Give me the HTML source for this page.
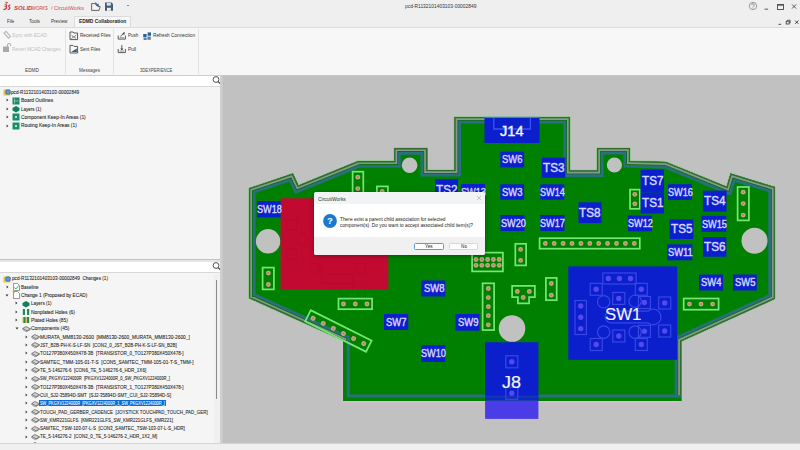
<!DOCTYPE html>
<html><head><meta charset="utf-8">
<style>
*{box-sizing:border-box}
html,body{margin:0;padding:0}
body{width:800px;height:450px;overflow:hidden;position:relative;background:#f0f0f0;font-family:"Liberation Sans",sans-serif;color:#222}
.a{position:absolute}
.t{position:absolute;white-space:pre;transform-origin:0 50%}
.k{-webkit-text-stroke:0.18px currentColor}
svg{position:absolute;overflow:visible}
</style></head><body>
<div class="a" style="left:0px;top:0px;width:800px;height:27px;background:#efefef;"></div>
<svg style="left:0;top:0" width="14" height="14" viewBox="0 0 14 14">
<path d="M5.4 2.2 L7.6 2.6 L5.8 3.6" fill="none" stroke="#cc3433" stroke-width="0.9"/>
<path d="M4.6 5 C6.6 4.4 7.6 5.6 5.8 6.6 C7.6 6.8 6.6 9.4 3.4 9.6" fill="none" stroke="#cc3433" stroke-width="1.1"/>
<path d="M10.4 5 C8.8 4.8 8 6.4 9.4 7.2 C10.6 7.9 9.6 9.6 7.8 9.4" fill="none" stroke="#cc3433" stroke-width="1.1"/>
</svg>
<div class="t" style="left:13.50px;top:4.62px;font-size:6.2px;line-height:6.2px;color:#cc3a3a;font-weight:bold;transform:scaleX(0.975);font-style:italic;">SOLID</div>
<div class="t" style="left:32.30px;top:4.62px;font-size:6.2px;line-height:6.2px;color:#cc3a3a;transform:scaleX(0.678);font-style:italic;">WORKS</div>
<div class="t" style="left:50.80px;top:5.38px;font-size:6.2px;line-height:6.2px;color:#cf4a48;transform:scaleX(0.856);">/ CircuitWorks</div>
<svg style="left:90px;top:1px" width="12" height="11" viewBox="0 0 12 11">
<path d="M1.6 2.6 h3.2 l3 3 h2.4 l-1.2 3.8 h-7.4 z" fill="#f4f4f4" stroke="#555" stroke-width="0.9" stroke-linejoin="round"/>
<path d="M5.2 1.6 l3 3" stroke="#2a5a9a" stroke-width="1.3"/><path d="M8.6 2.6 v2.4 h-2.4 z" fill="#2a5a9a"/>
</svg>
<svg style="left:104px;top:1px" width="10" height="11" viewBox="0 0 10 11">
<path d="M1 1.6 h6.6 l1.4 1.4 v6.8 h-8 z" fill="#455f78"/>
<rect x="2.8" y="2" width="4" height="2.6" fill="#dfe5ea"/>
<rect x="3" y="6.8" width="3.8" height="3" fill="#f0f0f0"/>
</svg>
<div class="a" style="left:127.4px;top:4.6px;width:1.4000000000000057px;height:1.8000000000000007px;background:#888;"></div>
<div class="t" style="left:404.50px;top:3.69px;font-size:5.4px;line-height:5.4px;color:#333;transform:scaleX(0.907);">pcd-R1132101403103-00002849</div>
<svg style="left:748px;top:1px" width="52" height="12" viewBox="0 0 52 12">
<circle cx="5" cy="5" r="3.7" fill="none" stroke="#666" stroke-width="0.6"/>
<path d="M3.7 4 a1.3 1.3 0 1 1 1.9 1.1 q-0.6 0.3 -0.6 1 v0.4" fill="none" stroke="#555" stroke-width="0.6"/><circle cx="5" cy="7.6" r="0.35" fill="#555"/>
<path d="M16.5 8.2 h3.6" stroke="#333" stroke-width="0.8"/>
<rect x="29.6" y="3.4" width="5.8" height="5.2" fill="none" stroke="#333" stroke-width="0.8"/>
<path d="M29.6 4.2 h5.8" stroke="#333" stroke-width="0.8"/>
<path d="M44 3.4 l4.2 4.2 M48.2 3.4 l-4.2 4.2" stroke="#333" stroke-width="0.8"/>
</svg>
<svg style="left:776px;top:18px" width="24" height="9" viewBox="0 0 24 9">
<path d="M2.5 6.3 h2.6" stroke="#333" stroke-width="0.9"/>
<rect x="10.2" y="3.2" width="3" height="2.8" fill="none" stroke="#333" stroke-width="0.8"/>
<path d="M11.4 3.2 v-1 h2.8 v2.6 h-1" fill="none" stroke="#333" stroke-width="0.7"/>
<path d="M19.2 2.6 l3.2 3.2 M22.4 2.6 l-3.2 3.2" stroke="#333" stroke-width="0.9"/>
</svg>
<div class="t" style="left:7.00px;top:19.32px;font-size:5.6px;line-height:5.6px;color:#333;transform:scaleX(0.787);">File</div>
<div class="t" style="left:28.50px;top:19.32px;font-size:5.6px;line-height:5.6px;color:#333;transform:scaleX(0.835);">Tools</div>
<div class="t" style="left:51.25px;top:19.32px;font-size:5.6px;line-height:5.6px;color:#333;transform:scaleX(0.818);">Preview</div>
<div class="a" style="left:74px;top:16px;width:57px;height:12px;background:#f7f7f7;border:1px solid #dcdcdc;border-bottom:none;"></div>
<div class="t" style="left:78.80px;top:19.32px;font-size:5.6px;line-height:5.6px;color:#222;font-weight:bold;transform:scaleX(0.872);">EDMD Collaboration</div>
<div class="a" style="left:0px;top:27px;width:800px;height:49px;background:#f7f7f7;border-top:1px solid #dcdcdc;border-bottom:1px solid #cdcdcd;"></div>
<div class="a" style="left:65.2px;top:29px;width:1.0px;height:45px;background:#e3e3e3;"></div>
<div class="a" style="left:112.8px;top:29px;width:1.0px;height:45px;background:#e3e3e3;"></div>
<div class="a" style="left:198px;top:29px;width:1px;height:45px;background:#e3e3e3;"></div>
<svg style="left:2px;top:30px" width="10" height="24" viewBox="0 0 10 24">
<path d="M2 3 l2 -1.6 l4.5 5 l-2 1.8 z" fill="none" stroke="#b9b9b9" stroke-width="1.2"/>
<rect x="1" y="16.5" width="6" height="5.5" fill="#a9a9a9"/>
<path d="M5.5 16.5 v-1.5 a1.6 1.6 0 0 1 3.2 0 v1" fill="none" stroke="#a9a9a9" stroke-width="1"/>
</svg>
<div class="t" style="left:11.90px;top:33.29px;font-size:5.4px;line-height:5.4px;color:#bdbdbd;transform:scaleX(0.883);">Sync with ECAD</div>
<div class="t" style="left:12.20px;top:47.29px;font-size:5.4px;line-height:5.4px;color:#bdbdbd;transform:scaleX(0.861);">Revert MCAD Changes</div>
<div class="t" style="left:25.00px;top:68.19px;font-size:5.4px;line-height:5.4px;color:#444;transform:scaleX(0.882);">EDMD</div>
<svg style="left:69px;top:31px" width="10" height="23" viewBox="0 0 10 23">
<path d="M1 1 h3 l1 1 h3.6 v6.6 h-7.6 z" fill="#f6f6f6" stroke="#5a5a5a" stroke-width="1"/>
<path d="M2.4 3.8 l2.4 2.6 l2.4 -2.6 M2.4 7.6 l2.4 -2 l2.4 2" fill="none" stroke="#6a6a6a" stroke-width="0.8"/>
<path d="M1 14.4 h3 l1 1 h3.6 v6.6 h-7.6 z" fill="#f6f6f6" stroke="#5a5a5a" stroke-width="1"/>
<path d="M2.2 21 l5.6 -3.6 v3.6 z" fill="#2c5a88"/>
</svg>
<div class="t" style="left:79.70px;top:33.09px;font-size:5.4px;line-height:5.4px;color:#333;transform:scaleX(0.864);">Received Files</div>
<div class="t" style="left:79.70px;top:47.39px;font-size:5.4px;line-height:5.4px;color:#333;transform:scaleX(0.845);">Sent Files</div>
<div class="t" style="left:79.30px;top:68.19px;font-size:5.4px;line-height:5.4px;color:#444;transform:scaleX(0.853);">Messages</div>
<svg style="left:117px;top:31px" width="36" height="23" viewBox="0 0 36 23">
<path d="M1.2 4.5 v3.6 h7.2 v-3.6" fill="none" stroke="#5a5a5a" stroke-width="1"/>
<path d="M2.6 6.6 h4.4" stroke="#777" stroke-width="0.7"/>
<path d="M3.4 5.4 l3.6 -3.6" stroke="#4a4a4a" stroke-width="0.9"/><path d="M7.6 0.8 v2.8 h-2.8 z" fill="#4a4a4a"/>
<path d="M1.2 18 v3.6 h7.2 v-3.6" fill="none" stroke="#5a5a5a" stroke-width="1"/>
<path d="M2.6 20.1 h4.4" stroke="#777" stroke-width="0.7"/>
<path d="M4.8 14 v4.6" stroke="#4a4a4a" stroke-width="0.9"/><path d="M3.2 17.4 h3.2 l-1.6 2 z" fill="#4a4a4a"/>
<path d="M26.2 3 h3.4 v3.4 h-3.4 z" fill="#2a62a0"/><path d="M30.6 1.4 h3.4 v3.4 h-3.4 z" fill="#2a62a0"/>
<path d="M26.6 7.2 h3 v1.6 h-3 z" fill="#2a62a0"/><path d="M30.4 5.6 h3.4 v3.2 h-3.4 z" fill="#6a7a8a"/>
</svg>
<div class="t" style="left:127.50px;top:33.09px;font-size:5.4px;line-height:5.4px;color:#333;transform:scaleX(0.845);">Push</div>
<div class="t" style="left:127.50px;top:47.39px;font-size:5.4px;line-height:5.4px;color:#333;transform:scaleX(0.898);">Pull</div>
<div class="t" style="left:152.90px;top:33.09px;font-size:5.4px;line-height:5.4px;color:#333;transform:scaleX(0.882);">Refresh Connection</div>
<div class="t" style="left:140.30px;top:68.19px;font-size:5.4px;line-height:5.4px;color:#444;transform:scaleX(0.775);">3DEXPERIENCE</div>
<div class="a" style="left:0px;top:75.5px;width:221px;height:367.5px;background:#f5f5f5;"></div>
<div class="a" style="left:0px;top:75.5px;width:221px;height:11.0px;background:#ffffff;border-bottom:1.4px solid #d8d8d8;"></div>
<svg style="left:212px;top:76px" width="9" height="9" viewBox="0 0 9 9">
<circle cx="4" cy="3.5" r="2.9" fill="none" stroke="#333" stroke-width="0.85"/>
<path d="M6.1 5.6 l2.3 2.3" stroke="#333" stroke-width="1.1"/>
</svg>
<div class="a" style="left:0px;top:258.5px;width:221px;height:1.1999999999999886px;background:#c2c2c2;"></div>
<div class="a" style="left:0px;top:259.7px;width:221px;height:2.3000000000000114px;background:#e6e6e6;"></div>
<div class="a" style="left:0px;top:262px;width:221px;height:10.5px;background:#ffffff;border-bottom:1.4px solid #d8d8d8;"></div>
<svg style="left:212px;top:261.5px" width="9" height="9" viewBox="0 0 9 9">
<circle cx="4" cy="3.5" r="2.9" fill="none" stroke="#333" stroke-width="0.85"/>
<path d="M6.1 5.6 l2.3 2.3" stroke="#333" stroke-width="1.1"/>
</svg>
<div class="a" style="left:213.5px;top:273.5px;width:6.5px;height:169.5px;background:#f0f0f0;"></div>
<div class="a" style="left:220px;top:75.5px;width:2.5px;height:367.5px;background:#cfcfcf;"></div>
<div class="a" style="left:215.8px;top:280px;width:1.0px;height:119px;background:#8a8a8a;"></div>
<div class="a" style="left:0px;top:443px;width:800px;height:1px;background:#d4d4d4;"></div>
<svg style="left:2.80px;top:88.20px" width="9" height="8" viewBox="0 0 9 8"><path d="M0.5 1.5 h6 l1 1 v5 h-7 z" fill="#e7c24a"/><circle cx="5" cy="4" r="2.8" fill="#3c78b8"/><path d="M2.6 4 h4.8 M5 1.2 v5.6" stroke="#9cd" stroke-width="0.5"/></svg>
<div class="t" style="left:11.20px;top:89.72px;font-size:5.6px;line-height:5.6px;color:#222222;transform:scaleX(0.835);-webkit-text-stroke:0.08px currentColor;">pcd-R1132101403103-00002849</div>
<svg style="left:5.50px;top:98.30px" width="3" height="4" viewBox="0 0 3 4"><path d="M0.6 0.5 L2.4 2 L0.6 3.5 Z" fill="#333"/></svg>
<svg style="left:12.00px;top:96.60px" width="9" height="8" viewBox="0 0 9 8"><rect x="0.5" y="0.5" width="7" height="7" fill="#1b8a68"/><path d="M2.5 1.5 v5 M2.5 4 h4" stroke="#cfe" stroke-width="0.5"/></svg>
<div class="t" style="left:21.00px;top:98.12px;font-size:5.6px;line-height:5.6px;color:#222222;transform:scaleX(0.870);-webkit-text-stroke:0.08px currentColor;">Board Outlines</div>
<svg style="left:5.50px;top:106.70px" width="3" height="4" viewBox="0 0 3 4"><path d="M0.6 0.5 L2.4 2 L0.6 3.5 Z" fill="#333"/></svg>
<svg style="left:12.00px;top:105.00px" width="9" height="8" viewBox="0 0 9 8"><path d="M0.5 3 l3.5 -2 l3.5 2 v2.5 l-3.5 2 l-3.5 -2 z" fill="#167e5e"/></svg>
<div class="t" style="left:21.00px;top:106.52px;font-size:5.6px;line-height:5.6px;color:#222222;transform:scaleX(0.802);-webkit-text-stroke:0.08px currentColor;">Layers (1)</div>
<svg style="left:5.50px;top:115.10px" width="3" height="4" viewBox="0 0 3 4"><path d="M0.6 0.5 L2.4 2 L0.6 3.5 Z" fill="#333"/></svg>
<svg style="left:12.00px;top:113.40px" width="9" height="8" viewBox="0 0 9 8"><rect x="0.5" y="0.5" width="7" height="7" fill="#1a8f6c"/><rect x="3" y="3.2" width="2" height="1.6" fill="#bfe"/></svg>
<div class="t" style="left:21.00px;top:114.92px;font-size:5.6px;line-height:5.6px;color:#222222;transform:scaleX(0.871);-webkit-text-stroke:0.08px currentColor;">Component Keep-In Areas (1)</div>
<svg style="left:5.50px;top:123.50px" width="3" height="4" viewBox="0 0 3 4"><path d="M0.6 0.5 L2.4 2 L0.6 3.5 Z" fill="#333"/></svg>
<svg style="left:12.00px;top:121.80px" width="9" height="8" viewBox="0 0 9 8"><rect x="0.5" y="0.5" width="7" height="7" fill="#1a8f6c"/><rect x="3" y="3.2" width="2" height="1.6" fill="#bfe"/></svg>
<div class="t" style="left:21.00px;top:123.32px;font-size:5.6px;line-height:5.6px;color:#222222;transform:scaleX(0.862);-webkit-text-stroke:0.08px currentColor;">Routing Keep-In Areas (1)</div>
<div class="a" style="left:0;top:272px;width:213px;height:171px;overflow:hidden">
<svg style="left:2.80px;top:2.70px" width="9" height="8" viewBox="0 0 9 8"><path d="M0.5 1.5 h6 l1 1 v5 h-7 z" fill="#e7c24a"/><circle cx="5" cy="4" r="2.8" fill="#3c78b8"/><path d="M2.6 4 h4.8 M5 1.2 v5.6" stroke="#9cd" stroke-width="0.5"/></svg>
<div class="t" style="left:12.00px;top:4.22px;font-size:5.6px;line-height:5.6px;color:#222222;transform:scaleX(0.830);-webkit-text-stroke:0.08px currentColor;">pcd-R1132101403103-00002849  Changes (1)</div>
<svg style="left:5.70px;top:12.73px" width="3" height="4" viewBox="0 0 3 4"><path d="M0.6 0.5 L2.4 2 L0.6 3.5 Z" fill="#333"/></svg>
<svg style="left:12.20px;top:11.03px" width="9" height="8" viewBox="0 0 9 8"><path d="M1.5 0.5 h4 l2 2 v5 h-6 z" fill="#fff" stroke="#555" stroke-width="0.6"/><path d="M2.5 4.5 l1.3 1.5 l3 -3.5" fill="none" stroke="#2a9a3a" stroke-width="0.9"/></svg>
<div class="t" style="left:21.00px;top:12.55px;font-size:5.6px;line-height:5.6px;color:#222222;transform:scaleX(0.818);-webkit-text-stroke:0.08px currentColor;">Baseline</div>
<svg style="left:5.20px;top:21.56px" width="4" height="3" viewBox="0 0 4 3"><path d="M0.5 0.6 L3.5 0.6 L2 2.4 Z" fill="#333"/></svg>
<svg style="left:12.20px;top:19.36px" width="9" height="8" viewBox="0 0 9 8"><path d="M1.5 0.5 h4 l2 2 v5 h-6 z" fill="#fff" stroke="#555" stroke-width="0.6"/><rect x="0.8" y="0.3" width="2" height="1.6" fill="#e39a3a"/></svg>
<div class="t" style="left:21.00px;top:20.88px;font-size:5.6px;line-height:5.6px;color:#222222;transform:scaleX(0.850);-webkit-text-stroke:0.08px currentColor;">Change 1 (Proposed by ECAD)</div>
<svg style="left:15.30px;top:29.39px" width="3" height="4" viewBox="0 0 3 4"><path d="M0.6 0.5 L2.4 2 L0.6 3.5 Z" fill="#333"/></svg>
<svg style="left:21.80px;top:27.69px" width="9" height="8" viewBox="0 0 9 8"><path d="M0.5 3 l3.5 -2 l3.5 2 v2.5 l-3.5 2 l-3.5 -2 z" fill="#167e5e"/></svg>
<div class="t" style="left:30.60px;top:29.21px;font-size:5.6px;line-height:5.6px;color:#222222;transform:scaleX(0.813);-webkit-text-stroke:0.08px currentColor;">Layers (1)</div>
<svg style="left:15.30px;top:37.72px" width="3" height="4" viewBox="0 0 3 4"><path d="M0.6 0.5 L2.4 2 L0.6 3.5 Z" fill="#333"/></svg>
<svg style="left:21.80px;top:36.02px" width="9" height="8" viewBox="0 0 9 8"><rect x="0.8" y="1" width="2.2" height="6" fill="#1c8a5a"/><rect x="5" y="1" width="2.2" height="6" fill="#1c8a5a"/></svg>
<div class="t" style="left:30.60px;top:37.54px;font-size:5.6px;line-height:5.6px;color:#222222;transform:scaleX(0.884);-webkit-text-stroke:0.08px currentColor;">Nonplated Holes (6)</div>
<svg style="left:15.30px;top:46.05px" width="3" height="4" viewBox="0 0 3 4"><path d="M0.6 0.5 L2.4 2 L0.6 3.5 Z" fill="#333"/></svg>
<svg style="left:21.80px;top:44.35px" width="9" height="8" viewBox="0 0 9 8"><rect x="0.5" y="1" width="7" height="6" fill="#d8c060"/><rect x="1.5" y="1" width="2" height="6" fill="#2a8a4a"/><rect x="5" y="1" width="2" height="6" fill="#2a8a4a"/></svg>
<div class="t" style="left:30.60px;top:45.87px;font-size:5.6px;line-height:5.6px;color:#222222;transform:scaleX(0.850);-webkit-text-stroke:0.08px currentColor;">Plated Holes (85)</div>
<svg style="left:14.80px;top:54.88px" width="4" height="3" viewBox="0 0 4 3"><path d="M0.5 0.6 L3.5 0.6 L2 2.4 Z" fill="#333"/></svg>
<svg style="left:21.80px;top:52.68px" width="9" height="8" viewBox="0 0 9 8"><path d="M0.8 3.5 l3 -2 l4.5 2.2 l-3 2.2 z" fill="#d0d0d0" stroke="#555" stroke-width="0.7"/><path d="M0.8 3.5 v1.2 l3.5 2 l4 -2.2 v-1" fill="none" stroke="#555" stroke-width="0.6"/></svg>
<div class="t" style="left:30.60px;top:54.20px;font-size:5.6px;line-height:5.6px;color:#222222;transform:scaleX(0.887);-webkit-text-stroke:0.08px currentColor;">Components (45)</div>
<svg style="left:24.90px;top:62.71px" width="3" height="4" viewBox="0 0 3 4"><path d="M0.6 0.5 L2.4 2 L0.6 3.5 Z" fill="#333"/></svg>
<svg style="left:31.40px;top:61.01px" width="9" height="8" viewBox="0 0 9 8"><path d="M0.8 3.5 l3 -2 l4.5 2.2 l-3 2.2 z" fill="#d0d0d0" stroke="#555" stroke-width="0.7"/><path d="M0.8 3.5 v1.2 l3.5 2 l4 -2.2 v-1" fill="none" stroke="#555" stroke-width="0.6"/></svg>
<div class="t" style="left:40.20px;top:62.53px;font-size:5.6px;line-height:5.6px;color:#222222;transform:scaleX(0.869);-webkit-text-stroke:0.08px currentColor;">MURATA_MM8130-2600  [MM8130-2600_MURATA_MM8130-2600_]</div>
<svg style="left:24.90px;top:71.04px" width="3" height="4" viewBox="0 0 3 4"><path d="M0.6 0.5 L2.4 2 L0.6 3.5 Z" fill="#333"/></svg>
<svg style="left:31.40px;top:69.34px" width="9" height="8" viewBox="0 0 9 8"><path d="M0.8 3.5 l3 -2 l4.5 2.2 l-3 2.2 z" fill="#d0d0d0" stroke="#555" stroke-width="0.7"/><path d="M0.8 3.5 v1.2 l3.5 2 l4 -2.2 v-1" fill="none" stroke="#555" stroke-width="0.6"/></svg>
<div class="t" style="left:40.20px;top:70.86px;font-size:5.6px;line-height:5.6px;color:#222222;transform:scaleX(0.806);-webkit-text-stroke:0.08px currentColor;">JST_B2B-PH-K-S-LF-SN  [CON2_0_JST_B2B-PH-K-S-LF-SN_B2B]</div>
<svg style="left:24.90px;top:79.37px" width="3" height="4" viewBox="0 0 3 4"><path d="M0.6 0.5 L2.4 2 L0.6 3.5 Z" fill="#333"/></svg>
<svg style="left:31.40px;top:77.67px" width="9" height="8" viewBox="0 0 9 8"><path d="M0.8 3.5 l3 -2 l4.5 2.2 l-3 2.2 z" fill="#d0d0d0" stroke="#555" stroke-width="0.7"/><path d="M0.8 3.5 v1.2 l3.5 2 l4 -2.2 v-1" fill="none" stroke="#555" stroke-width="0.6"/></svg>
<div class="t" style="left:40.20px;top:79.19px;font-size:5.6px;line-height:5.6px;color:#222222;transform:scaleX(0.823);-webkit-text-stroke:0.08px currentColor;">TO127P380X450X478-3B  [TRANSISTOR_0_TO127P380X450X478-]</div>
<svg style="left:24.90px;top:87.70px" width="3" height="4" viewBox="0 0 3 4"><path d="M0.6 0.5 L2.4 2 L0.6 3.5 Z" fill="#333"/></svg>
<svg style="left:31.40px;top:86.00px" width="9" height="8" viewBox="0 0 9 8"><path d="M0.8 3.5 l3 -2 l4.5 2.2 l-3 2.2 z" fill="#d0d0d0" stroke="#555" stroke-width="0.7"/><path d="M0.8 3.5 v1.2 l3.5 2 l4 -2.2 v-1" fill="none" stroke="#555" stroke-width="0.6"/></svg>
<div class="t" style="left:40.20px;top:87.52px;font-size:5.6px;line-height:5.6px;color:#222222;transform:scaleX(0.851);-webkit-text-stroke:0.08px currentColor;">SAMTEC_TMM-105-01-T-S  [CON5_SAMTEC_TMM-105-01-T-S_TMM-]</div>
<svg style="left:24.90px;top:96.03px" width="3" height="4" viewBox="0 0 3 4"><path d="M0.6 0.5 L2.4 2 L0.6 3.5 Z" fill="#333"/></svg>
<svg style="left:31.40px;top:94.33px" width="9" height="8" viewBox="0 0 9 8"><path d="M0.8 3.5 l3 -2 l4.5 2.2 l-3 2.2 z" fill="#d0d0d0" stroke="#555" stroke-width="0.7"/><path d="M0.8 3.5 v1.2 l3.5 2 l4 -2.2 v-1" fill="none" stroke="#555" stroke-width="0.6"/></svg>
<div class="t" style="left:40.20px;top:95.85px;font-size:5.6px;line-height:5.6px;color:#222222;transform:scaleX(0.811);-webkit-text-stroke:0.08px currentColor;">TE_5-146276-6  [CON6_TE_5-146276-6_HDR_1X6]</div>
<svg style="left:24.90px;top:104.36px" width="3" height="4" viewBox="0 0 3 4"><path d="M0.6 0.5 L2.4 2 L0.6 3.5 Z" fill="#333"/></svg>
<svg style="left:31.40px;top:102.66px" width="9" height="8" viewBox="0 0 9 8"><path d="M0.8 3.5 l3 -2 l4.5 2.2 l-3 2.2 z" fill="#d0d0d0" stroke="#555" stroke-width="0.7"/><path d="M0.8 3.5 v1.2 l3.5 2 l4 -2.2 v-1" fill="none" stroke="#555" stroke-width="0.6"/></svg>
<div class="t" style="left:40.20px;top:104.18px;font-size:5.6px;line-height:5.6px;color:#222222;transform:scaleX(0.729);-webkit-text-stroke:0.08px currentColor;">SW_PKGXV1224000R  [PKGXV1224000R_0_SW_PKGXV1224000R_]</div>
<svg style="left:24.90px;top:112.69px" width="3" height="4" viewBox="0 0 3 4"><path d="M0.6 0.5 L2.4 2 L0.6 3.5 Z" fill="#333"/></svg>
<svg style="left:31.40px;top:110.99px" width="9" height="8" viewBox="0 0 9 8"><path d="M0.8 3.5 l3 -2 l4.5 2.2 l-3 2.2 z" fill="#d0d0d0" stroke="#555" stroke-width="0.7"/><path d="M0.8 3.5 v1.2 l3.5 2 l4 -2.2 v-1" fill="none" stroke="#555" stroke-width="0.6"/></svg>
<div class="t" style="left:40.20px;top:112.51px;font-size:5.6px;line-height:5.6px;color:#222222;transform:scaleX(0.823);-webkit-text-stroke:0.08px currentColor;">TO127P380X450X478-3B  [TRANSISTOR_1_TO127P380X450X478-]</div>
<svg style="left:24.90px;top:121.02px" width="3" height="4" viewBox="0 0 3 4"><path d="M0.6 0.5 L2.4 2 L0.6 3.5 Z" fill="#333"/></svg>
<svg style="left:31.40px;top:119.32px" width="9" height="8" viewBox="0 0 9 8"><path d="M0.8 3.5 l3 -2 l4.5 2.2 l-3 2.2 z" fill="#d0d0d0" stroke="#555" stroke-width="0.7"/><path d="M0.8 3.5 v1.2 l3.5 2 l4 -2.2 v-1" fill="none" stroke="#555" stroke-width="0.6"/></svg>
<div class="t" style="left:40.20px;top:120.84px;font-size:5.6px;line-height:5.6px;color:#222222;transform:scaleX(0.815);-webkit-text-stroke:0.08px currentColor;">CUI_SJ2-35894D-SMT  [SJ2-35894D-SMT_CUI_SJ2-35894D-S]</div>
<svg style="left:24.90px;top:129.35px" width="3" height="4" viewBox="0 0 3 4"><path d="M0.6 0.5 L2.4 2 L0.6 3.5 Z" fill="#333"/></svg>
<svg style="left:31.40px;top:127.65px" width="9" height="8" viewBox="0 0 9 8"><path d="M0.8 3.5 l3 -2 l4.5 2.2 l-3 2.2 z" fill="#d0d0d0" stroke="#555" stroke-width="0.7"/><path d="M0.8 3.5 v1.2 l3.5 2 l4 -2.2 v-1" fill="none" stroke="#555" stroke-width="0.6"/></svg>
<div class="a" style="left:39.25px;top:128.04999999999995px;width:127.0px;height:6.400000000000006px;background:#0a6ad6;"></div>
<div class="t" style="left:40.20px;top:129.17px;font-size:5.6px;line-height:5.6px;color:#ffffff;transform:scaleX(0.701);-webkit-text-stroke:0.08px currentColor;">SW_PKGXV1224000R  [PKGXV1224000R_1_SW_PKGXV1224000R_]</div>
<svg style="left:24.90px;top:137.68px" width="3" height="4" viewBox="0 0 3 4"><path d="M0.6 0.5 L2.4 2 L0.6 3.5 Z" fill="#333"/></svg>
<svg style="left:31.40px;top:135.98px" width="9" height="8" viewBox="0 0 9 8"><path d="M0.8 3.5 l3 -2 l4.5 2.2 l-3 2.2 z" fill="#d0d0d0" stroke="#555" stroke-width="0.7"/><path d="M0.8 3.5 v1.2 l3.5 2 l4 -2.2 v-1" fill="none" stroke="#555" stroke-width="0.6"/></svg>
<div class="t" style="left:40.20px;top:137.50px;font-size:5.6px;line-height:5.6px;color:#222222;transform:scaleX(0.801);-webkit-text-stroke:0.08px currentColor;">TOUCH_PAD_GERBER_CADENCE  [JOYSTICK TOUCHPAD_TOUCH_PAD_GER]</div>
<svg style="left:24.90px;top:146.01px" width="3" height="4" viewBox="0 0 3 4"><path d="M0.6 0.5 L2.4 2 L0.6 3.5 Z" fill="#333"/></svg>
<svg style="left:31.40px;top:144.31px" width="9" height="8" viewBox="0 0 9 8"><path d="M0.8 3.5 l3 -2 l4.5 2.2 l-3 2.2 z" fill="#d0d0d0" stroke="#555" stroke-width="0.7"/><path d="M0.8 3.5 v1.2 l3.5 2 l4 -2.2 v-1" fill="none" stroke="#555" stroke-width="0.6"/></svg>
<div class="t" style="left:40.20px;top:145.83px;font-size:5.6px;line-height:5.6px;color:#222222;transform:scaleX(0.793);-webkit-text-stroke:0.08px currentColor;">SW_KMR221GLFS  [KMR221GLFS_SW_KMR221GLFS_KMR221]</div>
<svg style="left:24.90px;top:154.34px" width="3" height="4" viewBox="0 0 3 4"><path d="M0.6 0.5 L2.4 2 L0.6 3.5 Z" fill="#333"/></svg>
<svg style="left:31.40px;top:152.64px" width="9" height="8" viewBox="0 0 9 8"><path d="M0.8 3.5 l3 -2 l4.5 2.2 l-3 2.2 z" fill="#d0d0d0" stroke="#555" stroke-width="0.7"/><path d="M0.8 3.5 v1.2 l3.5 2 l4 -2.2 v-1" fill="none" stroke="#555" stroke-width="0.6"/></svg>
<div class="t" style="left:40.20px;top:154.16px;font-size:5.6px;line-height:5.6px;color:#222222;transform:scaleX(0.817);-webkit-text-stroke:0.08px currentColor;">SAMTEC_TSW-103-07-L-S  [CON3_SAMTEC_TSW-103-07-L-S_HDR]</div>
<svg style="left:24.90px;top:162.67px" width="3" height="4" viewBox="0 0 3 4"><path d="M0.6 0.5 L2.4 2 L0.6 3.5 Z" fill="#333"/></svg>
<svg style="left:31.40px;top:160.97px" width="9" height="8" viewBox="0 0 9 8"><path d="M0.8 3.5 l3 -2 l4.5 2.2 l-3 2.2 z" fill="#d0d0d0" stroke="#555" stroke-width="0.7"/><path d="M0.8 3.5 v1.2 l3.5 2 l4 -2.2 v-1" fill="none" stroke="#555" stroke-width="0.6"/></svg>
<div class="t" style="left:40.20px;top:162.49px;font-size:5.6px;line-height:5.6px;color:#222222;transform:scaleX(0.810);-webkit-text-stroke:0.08px currentColor;">TE_5-146276-2  [CON2_0_TE_5-146276-2_HDR_1X2_M]</div>
<svg style="left:24.90px;top:171.00px" width="3" height="4" viewBox="0 0 3 4"><path d="M0.6 0.5 L2.4 2 L0.6 3.5 Z" fill="#333"/></svg>
<svg style="left:31.40px;top:169.30px" width="9" height="8" viewBox="0 0 9 8"><path d="M0.8 3.5 l3 -2 l4.5 2.2 l-3 2.2 z" fill="#d0d0d0" stroke="#555" stroke-width="0.7"/><path d="M0.8 3.5 v1.2 l3.5 2 l4 -2.2 v-1" fill="none" stroke="#555" stroke-width="0.6"/></svg>
<div class="t" style="left:40.20px;top:170.82px;font-size:5.6px;line-height:5.6px;color:#222222;transform:scaleX(0.789);-webkit-text-stroke:0.08px currentColor;">SAMTEC_TSW-102-07-L-S  [CON2_SAMTEC_TSW-102-07-L-S_HDR]</div>
</div>
<svg style="left:0;top:0" width="800" height="450" viewBox="0 0 800 450">
<rect x="222.5" y="75.5" width="577.5" height="367.5" fill="#c1c1c1"/>
<defs><clipPath id="bc"><polygon points="249,188.3 292.9,173.6 298.4,185.5 358.3,161.1 394.2,161.1 394.2,148.1 427.2,148.1 427.2,170 454.4,170 454.4,117 570,117 570,170.5 597,170.5 597,148 630,148 630,161 665.8,161.9 726.7,186.8 730.6,173.6 774.9,187.1 774.9,298.8 681.2,341.3 681.2,401.1 343.2,401.1 343.2,340.4 249,298"/></clipPath></defs>
<polygon points="249,188.3 292.9,173.6 298.4,185.5 358.3,161.1 394.2,161.1 394.2,148.1 427.2,148.1 427.2,170 454.4,170 454.4,117 570,117 570,170.5 597,170.5 597,148 630,148 630,161 665.8,161.9 726.7,186.8 730.6,173.6 774.9,187.1 774.9,298.8 681.2,341.3 681.2,401.1 343.2,401.1 343.2,340.4 249,298" fill="none" stroke="#86cc86" stroke-width="1.6"/>
<polyline points="681.2,401.1 343.2,401.1 343.2,340.4" fill="none" stroke="#d2bccf" stroke-width="4"/>
<polygon points="249,188.3 292.9,173.6 298.4,185.5 358.3,161.1 394.2,161.1 394.2,148.1 427.2,148.1 427.2,170 454.4,170 454.4,117 570,117 570,170.5 597,170.5 597,148 630,148 630,161 665.8,161.9 726.7,186.8 730.6,173.6 774.9,187.1 774.9,298.8 681.2,341.3 681.2,401.1 343.2,401.1 343.2,340.4 249,298" fill="#008000"/>
<g clip-path="url(#bc)" fill="none" stroke-linejoin="miter"><polygon points="249,188.3 292.9,173.6 298.4,185.5 358.3,161.1 394.2,161.1 394.2,148.1 427.2,148.1 427.2,170 454.4,170 454.4,117 570,117 570,170.5 597,170.5 597,148 630,148 630,161 665.8,161.9 726.7,186.8 730.6,173.6 774.9,187.1 774.9,298.8 681.2,341.3 681.2,401.1 343.2,401.1 343.2,340.4 249,298" stroke="#28707c" stroke-width="13.2"/><polygon points="249,188.3 292.9,173.6 298.4,185.5 358.3,161.1 394.2,161.1 394.2,148.1 427.2,148.1 427.2,170 454.4,170 454.4,117 570,117 570,170.5 597,170.5 597,148 630,148 630,161 665.8,161.9 726.7,186.8 730.6,173.6 774.9,187.1 774.9,298.8 681.2,341.3 681.2,401.1 343.2,401.1 343.2,340.4 249,298" stroke="#106c18" stroke-width="7.6"/><polygon points="249,188.3 292.9,173.6 298.4,185.5 358.3,161.1 394.2,161.1 394.2,148.1 427.2,148.1 427.2,170 454.4,170 454.4,117 570,117 570,170.5 597,170.5 597,148 630,148 630,161 665.8,161.9 726.7,186.8 730.6,173.6 774.9,187.1 774.9,298.8 681.2,341.3 681.2,401.1 343.2,401.1 343.2,340.4 249,298" stroke="#8a988a" stroke-width="6"/><polygon points="249,188.3 292.9,173.6 298.4,185.5 358.3,161.1 394.2,161.1 394.2,148.1 427.2,148.1 427.2,170 454.4,170 454.4,117 570,117 570,170.5 597,170.5 597,148 630,148 630,161 665.8,161.9 726.7,186.8 730.6,173.6 774.9,187.1 774.9,298.8 681.2,341.3 681.2,401.1 343.2,401.1 343.2,340.4 249,298" stroke="#2a6e2a" stroke-width="2.6"/><polyline points="681.2,401.1 343.2,401.1 343.2,340.4" stroke="#28707c" stroke-width="12"/><polyline points="681.2,401.1 343.2,401.1 343.2,340.4" stroke="#008000" stroke-width="7"/></g>
<circle cx="268.1" cy="241.3" r="12.2" fill="#c1c1c1"/>
<circle cx="409.6" cy="165.2" r="7.8" fill="#c1c1c1"/>
<circle cx="614.4" cy="165" r="7.6" fill="#c1c1c1"/>
<circle cx="754.5" cy="240.7" r="13" fill="#c1c1c1"/>
<circle cx="512" cy="328.5" r="13.3" fill="#c1c1c1"/>
<rect x="280.6" y="198.3" width="107.7" height="91.1" fill="#c20a30"/>
<g fill="none" stroke="#a80826" stroke-width="0.8" opacity="0.45"><rect x="286.5" y="220" width="10" height="10"/><rect x="286.5" y="249" width="10" height="10"/><circle cx="301.7" cy="239.4" r="6"/><rect x="310" y="263.5" width="10" height="10"/><rect x="355.5" y="263.5" width="10" height="10"/><rect x="321.7" y="273.9" width="31" height="9.5"/></g>
<rect x="262.6" y="267.6" width="11.3" height="21.8" fill="none" stroke="#74e874" stroke-width="1.7"/><circle cx="268.4" cy="273.1" r="2.4" fill="#c9a684"/><circle cx="268.4" cy="273.1" r="1" fill="#a88660"/><circle cx="268.4" cy="284.5" r="2.4" fill="#c9a684"/><circle cx="268.4" cy="284.5" r="1" fill="#a88660"/>
<rect x="352.6" y="171.7" width="10.699999999999978" height="22.200000000000006" fill="none" stroke="#74e874" stroke-width="1.7"/><circle cx="357.8" cy="177.2" r="2.4" fill="#c9a684"/><circle cx="357.8" cy="177.2" r="1" fill="#a88660"/><circle cx="357.8" cy="188.6" r="2.4" fill="#c9a684"/><circle cx="357.8" cy="188.6" r="1" fill="#a88660"/>
<rect x="376.90000000000003" y="186.4" width="10.99999999999999" height="21.99999999999999" fill="none" stroke="#74e874" stroke-width="1.7"/><circle cx="382.2" cy="191.5" r="2.4" fill="#c9a684"/><circle cx="382.2" cy="191.5" r="1" fill="#a88660"/><circle cx="382.2" cy="203" r="2.4" fill="#c9a684"/><circle cx="382.2" cy="203" r="1" fill="#a88660"/>
<rect x="338.5" y="298.6" width="33.60000000000001" height="10.600000000000012" fill="none" stroke="#74e874" stroke-width="1.7"/><circle cx="343.5" cy="304" r="2.4" fill="#c9a684"/><circle cx="343.5" cy="304" r="1" fill="#a88660"/><circle cx="355.3" cy="304" r="2.4" fill="#c9a684"/><circle cx="355.3" cy="304" r="1" fill="#a88660"/><circle cx="367" cy="304" r="2.4" fill="#c9a684"/><circle cx="367" cy="304" r="1" fill="#a88660"/>
<rect x="472.1" y="252.6" width="30.8" height="18.8" fill="none" stroke="#74e874" stroke-width="1.7"/><circle cx="476.0" cy="259.5" r="2.4" fill="#c9a684"/><circle cx="476.0" cy="259.5" r="1" fill="#a88660"/><circle cx="476.0" cy="265.3" r="2.4" fill="#c9a684"/><circle cx="476.0" cy="265.3" r="1" fill="#a88660"/><circle cx="481.8" cy="259.5" r="2.4" fill="#c9a684"/><circle cx="481.8" cy="259.5" r="1" fill="#a88660"/><circle cx="481.8" cy="265.3" r="2.4" fill="#c9a684"/><circle cx="481.8" cy="265.3" r="1" fill="#a88660"/><circle cx="487.6" cy="259.5" r="2.4" fill="#c9a684"/><circle cx="487.6" cy="259.5" r="1" fill="#a88660"/><circle cx="487.6" cy="265.3" r="2.4" fill="#c9a684"/><circle cx="487.6" cy="265.3" r="1" fill="#a88660"/><circle cx="493.4" cy="259.5" r="2.4" fill="#c9a684"/><circle cx="493.4" cy="259.5" r="1" fill="#a88660"/><circle cx="493.4" cy="265.3" r="2.4" fill="#c9a684"/><circle cx="493.4" cy="265.3" r="1" fill="#a88660"/><circle cx="499.2" cy="259.5" r="2.4" fill="#c9a684"/><circle cx="499.2" cy="259.5" r="1" fill="#a88660"/><circle cx="499.2" cy="265.3" r="2.4" fill="#c9a684"/><circle cx="499.2" cy="265.3" r="1" fill="#a88660"/>
<rect x="515.3000000000001" y="243.79999999999998" width="10.8" height="21.600000000000012" fill="none" stroke="#74e874" stroke-width="1.7"/><circle cx="520.6" cy="249.4" r="2.4" fill="#c9a684"/><circle cx="520.6" cy="249.4" r="1" fill="#a88660"/><circle cx="520.6" cy="260.4" r="2.4" fill="#c9a684"/><circle cx="520.6" cy="260.4" r="1" fill="#a88660"/>
<rect x="482.6" y="283.3" width="11.49999999999999" height="46.8" fill="none" stroke="#74e874" stroke-width="1.7"/><circle cx="488.3" cy="288.5" r="2.4" fill="#c9a684"/><circle cx="488.3" cy="288.5" r="1" fill="#a88660"/><circle cx="488.3" cy="297.57" r="2.4" fill="#c9a684"/><circle cx="488.3" cy="297.57" r="1" fill="#a88660"/><circle cx="488.3" cy="306.64" r="2.4" fill="#c9a684"/><circle cx="488.3" cy="306.64" r="1" fill="#a88660"/><circle cx="488.3" cy="315.71" r="2.4" fill="#c9a684"/><circle cx="488.3" cy="315.71" r="1" fill="#a88660"/><circle cx="488.3" cy="324.78" r="2.4" fill="#c9a684"/><circle cx="488.3" cy="324.78" r="1" fill="#a88660"/>
<rect x="545.9" y="277.90000000000003" width="10.8" height="22.3" fill="none" stroke="#74e874" stroke-width="1.7"/><circle cx="551.3" cy="283.5" r="2.4" fill="#c9a684"/><circle cx="551.3" cy="283.5" r="1" fill="#a88660"/><circle cx="551.3" cy="295.2" r="2.4" fill="#c9a684"/><circle cx="551.3" cy="295.2" r="1" fill="#a88660"/>
<rect x="539.6" y="238.2" width="100.19999999999997" height="10.500000000000018" fill="none" stroke="#74e874" stroke-width="1.7"/><circle cx="545.3" cy="243.5" r="2.4" fill="#c9a684"/><circle cx="545.3" cy="243.5" r="1" fill="#a88660"/><circle cx="554.1999999999999" cy="243.5" r="2.4" fill="#c9a684"/><circle cx="554.1999999999999" cy="243.5" r="1" fill="#a88660"/><circle cx="563.0999999999999" cy="243.5" r="2.4" fill="#c9a684"/><circle cx="563.0999999999999" cy="243.5" r="1" fill="#a88660"/><circle cx="572.0" cy="243.5" r="2.4" fill="#c9a684"/><circle cx="572.0" cy="243.5" r="1" fill="#a88660"/><circle cx="580.9" cy="243.5" r="2.4" fill="#c9a684"/><circle cx="580.9" cy="243.5" r="1" fill="#a88660"/><circle cx="589.8" cy="243.5" r="2.4" fill="#c9a684"/><circle cx="589.8" cy="243.5" r="1" fill="#a88660"/><circle cx="598.6999999999999" cy="243.5" r="2.4" fill="#c9a684"/><circle cx="598.6999999999999" cy="243.5" r="1" fill="#a88660"/><circle cx="607.5999999999999" cy="243.5" r="2.4" fill="#c9a684"/><circle cx="607.5999999999999" cy="243.5" r="1" fill="#a88660"/><circle cx="616.5" cy="243.5" r="2.4" fill="#c9a684"/><circle cx="616.5" cy="243.5" r="1" fill="#a88660"/><circle cx="625.4" cy="243.5" r="2.4" fill="#c9a684"/><circle cx="625.4" cy="243.5" r="1" fill="#a88660"/><circle cx="634.3" cy="243.5" r="2.4" fill="#c9a684"/><circle cx="634.3" cy="243.5" r="1" fill="#a88660"/>
<rect x="630.0" y="189.6" width="9.8" height="19.200000000000006" fill="none" stroke="#74e874" stroke-width="1.7"/><circle cx="634.8" cy="194.3" r="2.4" fill="#c9a684"/><circle cx="634.8" cy="194.3" r="1" fill="#a88660"/><circle cx="634.8" cy="203.8" r="2.4" fill="#c9a684"/><circle cx="634.8" cy="203.8" r="1" fill="#a88660"/>
<rect x="737.6" y="187.0" width="11.3" height="33.39999999999999" fill="none" stroke="#74e874" stroke-width="1.7"/><circle cx="743.2" cy="192.2" r="2.4" fill="#c9a684"/><circle cx="743.2" cy="192.2" r="1" fill="#a88660"/><circle cx="743.2" cy="203.6" r="2.4" fill="#c9a684"/><circle cx="743.2" cy="203.6" r="1" fill="#a88660"/><circle cx="743.2" cy="215.1" r="2.4" fill="#c9a684"/><circle cx="743.2" cy="215.1" r="1" fill="#a88660"/>
<rect x="683.7" y="298.5" width="34.90000000000002" height="11.200000000000035" fill="none" stroke="#74e874" stroke-width="1.7"/><circle cx="689.5" cy="304.1" r="2.4" fill="#c9a684"/><circle cx="689.5" cy="304.1" r="1" fill="#a88660"/><circle cx="701" cy="304.1" r="2.4" fill="#c9a684"/><circle cx="701" cy="304.1" r="1" fill="#a88660"/><circle cx="712.6" cy="304.1" r="2.4" fill="#c9a684"/><circle cx="712.6" cy="304.1" r="1" fill="#a88660"/>
<path d="M512.1 285.9 h22.8 v11.3 h-5.8 v6.2 h-11.2 v-6.2 h-5.8 z" fill="none" stroke="#74e874" stroke-width="1.7"/><circle cx="517.3" cy="291.5" r="2.4" fill="#c9a684"/><circle cx="517.3" cy="291.5" r="1" fill="#a88660"/><circle cx="529.3" cy="291.5" r="2.4" fill="#c9a684"/><circle cx="529.3" cy="291.5" r="1" fill="#a88660"/><circle cx="523.2" cy="297.5" r="2.4" fill="#c9a684"/><circle cx="523.2" cy="297.5" r="1" fill="#a88660"/>
<g transform="translate(338.4 331) rotate(26.5)"><rect x="-34.0" y="-6.25" width="68" height="12.5" fill="none" stroke="#74e874" stroke-width="1.7"/><circle cx="-28.30" cy="0" r="2.4" fill="#c9a684"/><circle cx="-28.30" cy="0" r="1" fill="#a88660"/><circle cx="-16.98" cy="0" r="2.4" fill="#c9a684"/><circle cx="-16.98" cy="0" r="1" fill="#a88660"/><circle cx="-5.66" cy="0" r="2.4" fill="#c9a684"/><circle cx="-5.66" cy="0" r="1" fill="#a88660"/><circle cx="5.66" cy="0" r="2.4" fill="#c9a684"/><circle cx="5.66" cy="0" r="1" fill="#a88660"/><circle cx="16.98" cy="0" r="2.4" fill="#c9a684"/><circle cx="16.98" cy="0" r="1" fill="#a88660"/><circle cx="28.30" cy="0" r="2.4" fill="#c9a684"/><circle cx="28.30" cy="0" r="1" fill="#a88660"/></g>
<rect x="500.3" y="151.7" width="23.80" height="15.70" fill="#0b1fcc"/>
<rect x="541.7" y="157.7" width="23.70" height="20.00" fill="#0b1fcc"/>
<rect x="500.3" y="184.3" width="23.80" height="15.40" fill="#0b1fcc"/>
<rect x="540.3" y="184.3" width="24.00" height="15.40" fill="#0b1fcc"/>
<rect x="435" y="179.2" width="23.00" height="20.30" fill="#0b1fcc"/>
<rect x="460.8" y="184" width="24.20" height="16.00" fill="#0b1fcc"/>
<rect x="500.5" y="215" width="24.10" height="16.00" fill="#0b1fcc"/>
<rect x="540.4" y="215" width="24.10" height="16.00" fill="#0b1fcc"/>
<rect x="578.5" y="202.3" width="23.00" height="20.80" fill="#0b1fcc"/>
<rect x="628" y="215.6" width="23.90" height="15.70" fill="#0b1fcc"/>
<rect x="640.6" y="169.6" width="23.40" height="22.80" fill="#0b1fcc"/>
<rect x="640.6" y="192.4" width="23.40" height="21.10" fill="#0b1fcc"/>
<rect x="668" y="184.2" width="24.00" height="15.70" fill="#0b1fcc"/>
<rect x="669.5" y="219.4" width="23.90" height="19.60" fill="#0b1fcc"/>
<rect x="667.4" y="244.3" width="24.90" height="16.00" fill="#0b1fcc"/>
<rect x="702.9" y="190.6" width="23.60" height="21.00" fill="#0b1fcc"/>
<rect x="701.5" y="215.8" width="24.90" height="16.00" fill="#0b1fcc"/>
<rect x="703" y="237" width="23.40" height="19.70" fill="#0b1fcc"/>
<rect x="699" y="274.5" width="24.00" height="16.00" fill="#0b1fcc"/>
<rect x="733" y="274.5" width="23.80" height="16.00" fill="#0b1fcc"/>
<rect x="421.3" y="280.5" width="24.00" height="16.00" fill="#0b1fcc"/>
<rect x="455.5" y="314" width="24.00" height="16.70" fill="#0b1fcc"/>
<rect x="421.2" y="345.3" width="24.10" height="16.70" fill="#0b1fcc"/>
<rect x="384" y="314" width="24.30" height="16.00" fill="#0b1fcc"/>
<rect x="257" y="201" width="23.60" height="16.40" fill="#0b1fcc"/>
<rect x="484.5" y="117" width="55.00" height="26.00" fill="#0b1fcc"/>
<rect x="568.3" y="266.4" width="108.90" height="93.40" fill="#0b1fcc"/>
<rect x="485.1" y="342.2" width="53.30" height="58.30" fill="#0b1fcc"/>
<rect x="485.1" y="400.5" width="53.30" height="18.40" fill="#4a3ce6"/>
<rect x="485.1" y="395.6" width="53.30" height="2.2" fill="#1a40b0" opacity="0.7"/>
<rect x="485.1" y="397.8" width="53.30" height="2.7" fill="#0a30c0" opacity="0.6"/>
<g fill="none" stroke="#3848e6" stroke-width="1.2"><rect x="602.8" y="273" width="33.3" height="11"/><rect x="590.2" y="283.3" width="12" height="12"/><rect x="635.3" y="283.3" width="12" height="12"/><rect x="612.8" y="292.4" width="12" height="12"/><rect x="638.4" y="296.5" width="12" height="12"/><rect x="658.7" y="297" width="12" height="12"/><rect x="638.4" y="325.3" width="12" height="12"/><rect x="658.7" y="325" width="12" height="12"/><rect x="612.8" y="330" width="12" height="12"/><rect x="590.2" y="338.5" width="12" height="12"/><rect x="635.3" y="338.5" width="12" height="12"/><rect x="575" y="300.5" width="11.4" height="34"/><circle cx="603.7" cy="301.8" r="6.2"/><circle cx="635.1" cy="301.2" r="6.2"/><circle cx="603.7" cy="332.1" r="6.2"/><circle cx="635.1" cy="332.1" r="6.2"/><path d="M611 311.2 H648 A7.8 7.8 0 1 1 648 322.8 H611 A5.8 5.8 0 0 1 611 311.2 Z"/><rect x="505.8" y="355.8" width="12" height="12"/><rect x="505.8" y="387.3" width="12" height="12"/></g>
<path d="M493.8 117.5 V129 H530.4 V117.5" fill="none" stroke="#3a52ee" stroke-width="1.3"/><path d="M484.5 117.3 H539.5" stroke="#5a8af0" stroke-width="1"/>
<g fill="#5548ee"><circle cx="596.2" cy="289.3" r="2.7"/><circle cx="641.3" cy="289.3" r="2.7"/><circle cx="618.8" cy="298.4" r="2.7"/><circle cx="644.4" cy="302.5" r="2.7"/><circle cx="664.7" cy="303" r="2.7"/><circle cx="644.4" cy="331.3" r="2.7"/><circle cx="664.7" cy="331" r="2.7"/><circle cx="618.8" cy="336" r="2.7"/><circle cx="596.2" cy="344.5" r="2.7"/><circle cx="641.3" cy="344.5" r="2.7"/><circle cx="608.3" cy="278.5" r="2.7"/><circle cx="619.4" cy="278.5" r="2.7"/><circle cx="630.5" cy="278.5" r="2.7"/><circle cx="580.7" cy="306" r="2.7"/><circle cx="580.7" cy="317.3" r="2.7"/><circle cx="580.7" cy="328.6" r="2.7"/><circle cx="511.8" cy="361.8" r="2.7"/><circle cx="511.8" cy="393.3" r="2.7"/></g>
</svg>
<div class="t" style="left:502.40px;top:155.35px;font-size:10px;line-height:10px;color:#d6d6ff;transform:scaleX(0.940);-webkit-text-stroke:0.4px #d6d6ff;">SW6</div>
<div class="t" style="left:542.85px;top:161.86px;font-size:12.8px;line-height:12.8px;color:#d6d6ff;transform:scaleX(0.914);-webkit-text-stroke:0.45px #d6d6ff;">TS3</div>
<div class="t" style="left:502.40px;top:187.80px;font-size:10px;line-height:10px;color:#d6d6ff;transform:scaleX(0.940);-webkit-text-stroke:0.4px #d6d6ff;">SW3</div>
<div class="t" style="left:540.30px;top:187.80px;font-size:10px;line-height:10px;color:#d6d6ff;transform:scaleX(0.912);-webkit-text-stroke:0.4px #d6d6ff;">SW14</div>
<div class="t" style="left:435.80px;top:183.51px;font-size:12.8px;line-height:12.8px;color:#d6d6ff;transform:scaleX(0.914);-webkit-text-stroke:0.45px #d6d6ff;">TS2</div>
<div class="t" style="left:460.90px;top:187.80px;font-size:10px;line-height:10px;color:#d6d6ff;transform:scaleX(0.912);-webkit-text-stroke:0.4px #d6d6ff;">SW13</div>
<div class="t" style="left:500.55px;top:218.80px;font-size:10px;line-height:10px;color:#d6d6ff;transform:scaleX(0.912);-webkit-text-stroke:0.4px #d6d6ff;">SW20</div>
<div class="t" style="left:540.45px;top:218.80px;font-size:10px;line-height:10px;color:#d6d6ff;transform:scaleX(0.912);-webkit-text-stroke:0.4px #d6d6ff;">SW17</div>
<div class="t" style="left:579.30px;top:206.86px;font-size:12.8px;line-height:12.8px;color:#d6d6ff;transform:scaleX(0.914);-webkit-text-stroke:0.45px #d6d6ff;">TS8</div>
<div class="t" style="left:627.95px;top:219.25px;font-size:10px;line-height:10px;color:#d6d6ff;transform:scaleX(0.912);-webkit-text-stroke:0.4px #d6d6ff;">SW12</div>
<div class="t" style="left:641.60px;top:175.16px;font-size:12.8px;line-height:12.8px;color:#d6d6ff;transform:scaleX(0.914);-webkit-text-stroke:0.45px #d6d6ff;">TS7</div>
<div class="t" style="left:641.60px;top:197.11px;font-size:12.8px;line-height:12.8px;color:#d6d6ff;transform:scaleX(0.914);-webkit-text-stroke:0.45px #d6d6ff;">TS1</div>
<div class="t" style="left:668.00px;top:187.85px;font-size:10px;line-height:10px;color:#d6d6ff;transform:scaleX(0.912);-webkit-text-stroke:0.4px #d6d6ff;">SW16</div>
<div class="t" style="left:670.75px;top:223.36px;font-size:12.8px;line-height:12.8px;color:#d6d6ff;transform:scaleX(0.914);-webkit-text-stroke:0.45px #d6d6ff;">TS5</div>
<div class="t" style="left:667.85px;top:248.10px;font-size:10px;line-height:10px;color:#d6d6ff;transform:scaleX(0.936);-webkit-text-stroke:0.4px #d6d6ff;">SW11</div>
<div class="t" style="left:704.00px;top:195.26px;font-size:12.8px;line-height:12.8px;color:#d6d6ff;transform:scaleX(0.914);-webkit-text-stroke:0.45px #d6d6ff;">TS4</div>
<div class="t" style="left:701.95px;top:219.60px;font-size:10px;line-height:10px;color:#d6d6ff;transform:scaleX(0.912);-webkit-text-stroke:0.4px #d6d6ff;">SW15</div>
<div class="t" style="left:704.00px;top:241.01px;font-size:12.8px;line-height:12.8px;color:#d6d6ff;transform:scaleX(0.914);-webkit-text-stroke:0.45px #d6d6ff;">TS6</div>
<div class="t" style="left:701.20px;top:278.30px;font-size:10px;line-height:10px;color:#d6d6ff;transform:scaleX(0.940);-webkit-text-stroke:0.4px #d6d6ff;">SW4</div>
<div class="t" style="left:735.10px;top:278.30px;font-size:10px;line-height:10px;color:#d6d6ff;transform:scaleX(0.940);-webkit-text-stroke:0.4px #d6d6ff;">SW5</div>
<div class="t" style="left:423.50px;top:284.30px;font-size:10px;line-height:10px;color:#d6d6ff;transform:scaleX(0.940);-webkit-text-stroke:0.4px #d6d6ff;">SW8</div>
<div class="t" style="left:457.70px;top:318.15px;font-size:10px;line-height:10px;color:#d6d6ff;transform:scaleX(0.940);-webkit-text-stroke:0.4px #d6d6ff;">SW9</div>
<div class="t" style="left:421.25px;top:349.45px;font-size:10px;line-height:10px;color:#d6d6ff;transform:scaleX(0.912);-webkit-text-stroke:0.4px #d6d6ff;">SW10</div>
<div class="t" style="left:386.35px;top:317.80px;font-size:10px;line-height:10px;color:#d6d6ff;transform:scaleX(0.940);-webkit-text-stroke:0.4px #d6d6ff;">SW7</div>
<div class="t" style="left:256.80px;top:205.00px;font-size:10px;line-height:10px;color:#d6d6ff;transform:scaleX(0.912);-webkit-text-stroke:0.4px #d6d6ff;">SW18</div>
<div class="t" style="left:500.25px;top:123.78px;font-size:14px;line-height:14px;color:#f4f4ff;transform:scaleX(1.043);-webkit-text-stroke:0.4px #f4f4ff;">J14</div>
<div class="t" style="left:604.75px;top:306.05px;font-size:17.4px;line-height:17.4px;color:#f4f4ff;transform:scaleX(0.967);-webkit-text-stroke:0.12px #f4f4ff;">SW1</div>
<div class="t" style="left:501.50px;top:373.65px;font-size:17.4px;line-height:17.4px;color:#f4f4ff;transform:scaleX(1.030);-webkit-text-stroke:0.2px #f4f4ff;">J8</div>
<div class="a" style="left:314.4px;top:192.4px;width:171px;height:62.5px;border-radius:2.5px;background:#fff;box-shadow:0 1px 5px rgba(0,0,0,0.35);overflow:hidden"><div class="a" style="left:0;top:0;width:171px;height:11.9px;background:#f1f3f5"></div><div class="a" style="left:0;top:44.6px;width:171px;height:18px;background:#f0f0f0"></div></div>
<div class="t" style="left:318.10px;top:196.57px;font-size:5.2px;line-height:5.2px;color:#333;transform:scaleX(0.950);">CircuitWorks</div>
<svg style="left:476px;top:195px" width="6" height="6" viewBox="0 0 6 6"><path d="M1 1 l4 4 M5 1 l-4 4" stroke="#aaa" stroke-width="0.6"/></svg>
<svg style="left:322.75px;top:214px" width="14" height="14" viewBox="0 0 14 14"><circle cx="7" cy="7" r="6.9" fill="#1b78d0"/><text x="7" y="10.2" font-size="9.5" font-weight="bold" text-anchor="middle" fill="#fff" font-family="Liberation Sans">?</text></svg>
<div class="t" style="left:340.30px;top:216.73px;font-size:5.3px;line-height:5.3px;color:#222;transform:scaleX(0.907);">There exist a parent child association for selected</div>
<div class="t" style="left:340.30px;top:222.53px;font-size:5.3px;line-height:5.3px;color:#222;transform:scaleX(0.901);">component(s). Do you want to accept associated child item(s)?</div>
<div class="a" style="left:413.7px;top:242.5px;width:30.5px;height:7.8px;background:#fdfdfd;border:0.8px solid #5a9ad8;border-radius:1.5px"></div>
<div class="a" style="left:449.2px;top:242.5px;width:28.8px;height:7.8px;background:#fdfdfd;border:0.6px solid #d8d8d8;border-radius:1.5px"></div>
<div class="t" style="left:425.25px;top:244.37px;font-size:5.2px;line-height:5.2px;color:#222;transform:scaleX(0.885);">Yes</div>
<div class="t" style="left:460.60px;top:244.37px;font-size:5.2px;line-height:5.2px;color:#222;transform:scaleX(0.901);">No</div>
</body></html>
